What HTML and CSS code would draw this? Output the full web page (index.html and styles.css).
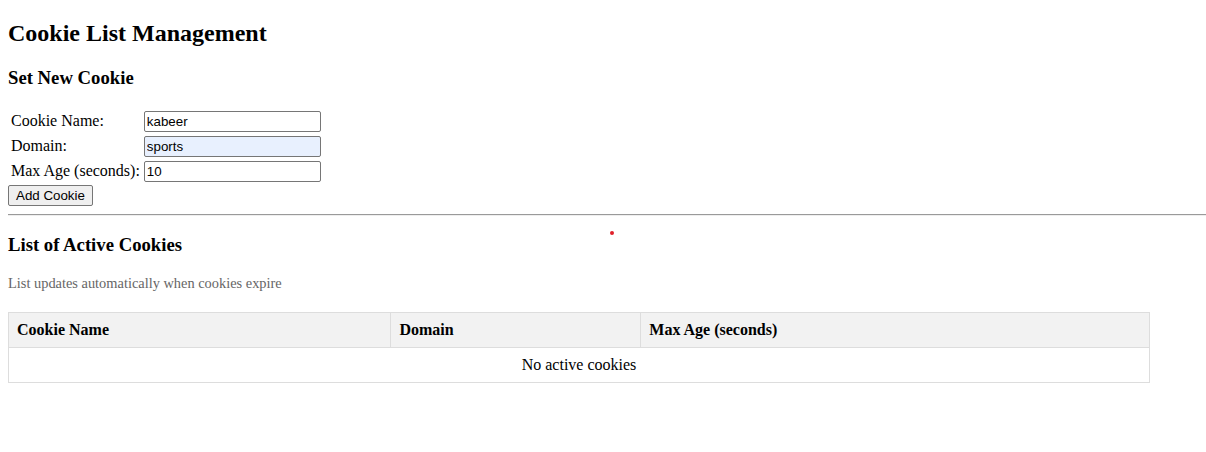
FILE: index.html
```html
<!DOCTYPE html>
<html>
<head>
<meta charset="utf-8">
<title>Cookie List Management</title>
<link rel="stylesheet" href="styles.css">
</head>
<body>
<h2 class="title">Cookie List Management</h2>
<h3 class="section">Set New Cookie</h3>
<form class="cookie-form">
  <table class="form-table">
    <tr>
      <td><label for="name">Cookie Name:</label></td>
      <td><input class="field" id="name" type="text" value="kabeer"></td>
    </tr>
    <tr>
      <td><label for="domain">Domain:</label></td>
      <td><input class="field field-autofill" id="domain" type="text" value="sports"></td>
    </tr>
    <tr>
      <td><label for="age">Max Age (seconds):</label></td>
      <td><input class="field" id="age" type="text" value="10"></td>
    </tr>
  </table>
  <div class="actions"><button class="btn" type="button">Add Cookie</button></div>
</form>
<hr class="divider">
<h3 class="section">List of Active Cookies</h3>
<p class="note">List updates automatically when cookies expire</p>
<table class="cookie-table">
  <thead>
    <tr>
      <th>Cookie Name</th>
      <th>Domain</th>
      <th>Max Age (seconds)</th>
    </tr>
  </thead>
  <tbody>
    <tr>
      <td class="empty" colspan="3">No active cookies</td>
    </tr>
  </tbody>
</table>
<span class="dot"></span>
</body>
</html>
```
FILE: styles.css
```css
html, body {
  margin: 0;
  padding: 0;
}
body {
  padding: 0 8px 8px;
  font-family: "Liberation Serif", "Times New Roman", serif;
  font-size: 16px;
  color: #000;
  background: #fff;
  position: relative;
}
.title {
  font-size: 24px;
  margin: 19.92px 0;
}
.section {
  font-size: 18.72px;
  margin: 18.72px 0;
}
.cookie-form {
  margin: 0;
}
.form-table {
  border-spacing: 2px;
}
.form-table td {
  padding: 1px;
}
.field {
  font-family: "Liberation Sans", Arial, sans-serif;
  font-size: 13.333px;
  width: 177px;
  height: 21px;
  box-sizing: border-box;
  padding: 1px 2px;
  border: 1px solid #767676;
  border-radius: 2px;
  background: #fff;
  color: #000;
  margin: 0;
}
.field-autofill {
  background: #e8f0fe;
}
.actions {
  display: block;
}
.btn {
  font-family: "Liberation Sans", Arial, sans-serif;
  font-size: 13.333px;
  padding: 1px 7px;
  height: 21px;
  box-sizing: border-box;
  border: 1px solid #767676;
  border-radius: 2px;
  background: #efefef;
  color: #000;
  margin: 0;
  vertical-align: top;
}
.divider {
  margin: 8px -8px 8px 0;
  border: 0;
  border-top: 1px solid #9a9a9a;
  border-bottom: 1px solid #eeeeee;
  height: 0;
}
.note {
  font-size: 14.4px;
  color: #666;
  margin: 18.72px 0 20.5px;
}
.cookie-table {
  width: 1142px;
  border-collapse: collapse;
}
.cookie-table th,
.cookie-table td {
  border: 1px solid #ddd;
  padding: 8px;
  text-align: left;
}
.cookie-table th {
  background: #f2f2f2;
  font-weight: bold;
}
.cookie-table td.empty {
  text-align: center;
}
.dot {
  position: absolute;
  left: 610px;
  top: 231px;
  width: 4px;
  height: 4px;
  border-radius: 50%;
  background: #e0202a;
}
```
